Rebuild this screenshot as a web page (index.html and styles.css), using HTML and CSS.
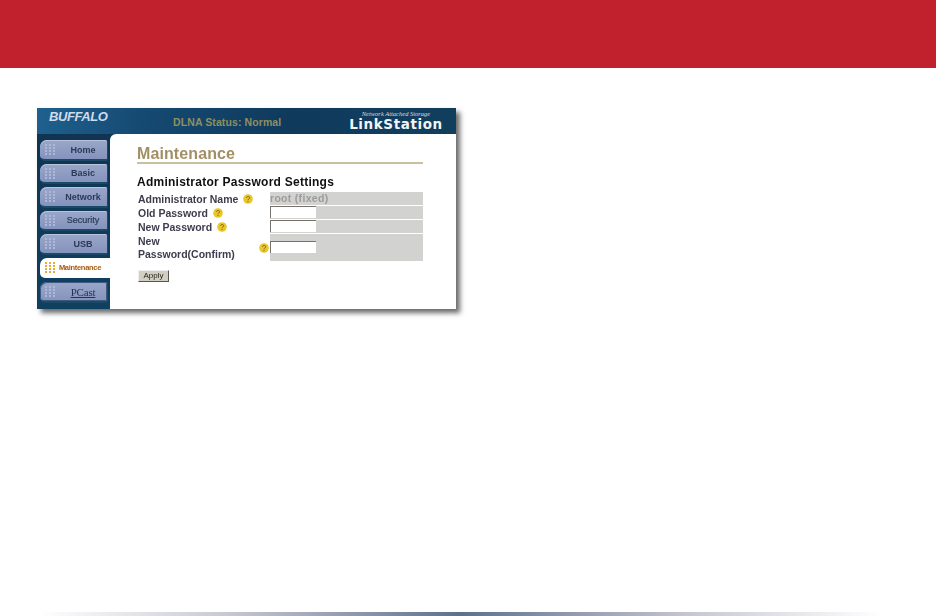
FILE: index.html
```html
<!DOCTYPE html>
<html lang="en">
<head>
<meta charset="utf-8">
<title>LinkStation Maintenance</title>
<link rel="stylesheet" href="styles.css">
</head>
<body>
<svg class="defs" width="0" height="0" aria-hidden="true">
  <symbol id="dots" viewBox="0 0 11 11">
    <g fill="currentColor">
      <rect x="0" y="0" width="2" height="2"/><rect x="4" y="0" width="2" height="2"/><rect x="8" y="0" width="2" height="2"/>
      <rect x="0" y="3" width="2" height="2"/><rect x="4" y="3" width="2" height="2"/><rect x="8" y="3" width="2" height="2"/>
      <rect x="0" y="6" width="2" height="2"/><rect x="4" y="6" width="2" height="2"/><rect x="8" y="6" width="2" height="2"/>
      <rect x="0" y="9" width="2" height="2"/><rect x="4" y="9" width="2" height="2"/><rect x="8" y="9" width="2" height="2"/>
    </g>
  </symbol>
  <symbol id="help" viewBox="0 0 10 10">
    <circle cx="5" cy="5" r="4.800" fill="#e9c62c"/>
    <path d="M3.500 4c0-2 3.200-2 3.200-.2C6.700 5 5 4.800 5 6.200" fill="none" stroke="#8a6a10" stroke-width="1"/>
    <circle cx="5" cy="7.600" r=".7" fill="#8a6a10"/>
  </symbol>
</svg>
<header class="banner"></header>
<main class="stage">
  <div class="window">
    <div class="topbar">
      <div class="brand">BUFFALO</div>
      <div class="status">DLNA Status: Normal</div>
      <div class="product">
        <span class="product-tag">Network Attached Storage</span>
        <span class="product-name">LinkStation</span>
      </div>
    </div>
    <div class="body">
      <nav class="side">
        <a class="tab"><svg class="dots"><use href="#dots"/></svg><span class="tab-label">Home</span></a>
        <a class="tab"><svg class="dots"><use href="#dots"/></svg><span class="tab-label">Basic</span></a>
        <a class="tab"><svg class="dots"><use href="#dots"/></svg><span class="tab-label">Network</span></a>
        <a class="tab"><svg class="dots"><use href="#dots"/></svg><span class="tab-label tab-thin">Security</span></a>
        <a class="tab"><svg class="dots"><use href="#dots"/></svg><span class="tab-label">USB</span></a>
        <a class="tab tab-active"><svg class="dots"><use href="#dots"/></svg><span class="tab-label">Maintenance</span></a>
        <a class="tab tab-pcast"><svg class="dots"><use href="#dots"/></svg><span class="tab-label pcast">PCast</span></a>
      </nav>
      <section class="panel">
        <h1 class="title">Maintenance</h1>
        <h2 class="subtitle">Administrator Password Settings</h2>
        <div class="form">
          <div class="lbl">Administrator Name <svg class="help"><use href="#help"/></svg></div>
          <div class="val val-text">root (fixed)</div>
          <div class="lbl">Old Password <svg class="help"><use href="#help"/></svg></div>
          <div class="val"><span class="field"></span></div>
          <div class="lbl">New Password <svg class="help"><use href="#help"/></svg></div>
          <div class="val"><span class="field"></span></div>
          <div class="lbl lbl-wrap"><span class="wrap-text">New Password(Confirm)</span><svg class="help"><use href="#help"/></svg></div>
          <div class="val val-tall"><span class="field"></span></div>
        </div>
        <button class="apply" type="button">Apply</button>
      </section>
    </div>
  </div>
</main>
<footer class="rule"></footer>
</body>
</html>
```
FILE: styles.css
```css
* { box-sizing: border-box; }
html, body { margin: 0; padding: 0; }
body {
  width: 936px;
  height: 616px;
  background: #fff;
  display: flex;
  flex-direction: column;
  font-family: "Liberation Sans", Arial, sans-serif;
  overflow: hidden;
}
.defs { position: absolute; }
.banner { height: 68px; background: #c1212d; flex: none; }
.stage { flex: 1; padding: 40px 0 0 37px; }
.window {
  width: 419px;
  height: 201px;
  display: flex;
  flex-direction: column;
  box-shadow: 4px 4px 5px #6a6a6a;
  background: linear-gradient(#10324f, #104060);
  filter: blur(.45px);
}
.topbar {
  height: 26px;
  flex: none;
  display: flex;
  align-items: flex-start;
  background: linear-gradient(100deg, #1f618f 0, #154a72 25%, #0f3a5c 60%, #123e5e 100%);
}
.brand {
  width: 136px;
  padding: 1px 0 0 12px;
  font: italic bold 13px/15px "Liberation Sans", sans-serif;
  letter-spacing: -.4px;
  color: #cfdcec;
}
.status {
  width: 171px;
  padding-top: 8px;
  font-size: 10.500px;
  line-height: 12px;
  font-weight: bold;
  letter-spacing: .1px;
  color: #8f8f62;
}
.product { display: flex; flex-direction: column; align-items: center; width: 96px; margin-left: 4px; padding-top: 2px; }
.product-tag { font: italic 6.500px/7px "Liberation Serif", serif; color: #d5dde5; white-space: nowrap; }
.product-name { font: bold 13.500px/14px "DejaVu Sans", sans-serif; color: #f2f4f6; white-space: nowrap; letter-spacing: .6px; }
.body { flex: 1; display: flex; min-height: 0; }
.side {
  width: 73px;
  flex: none;
  padding: 6px 0 0 3px;
  display: flex;
  flex-direction: column;
  gap: 3px;
}
.tab {
  height: 20.500px;
  width: 68px;
  display: flex;
  align-items: center;
  padding: 1px 0 0 5px;
  color: #aeb8d6;
  background: linear-gradient(#9aa7ca, #8493bd);
  border-radius: 7px 2px 2px 5px;
  border-bottom: 2px solid #1b4a66;
  border-right: 1px solid #1b4a66;
  box-shadow: inset 0 1px 0 #b9c3dc;
}
.dots { width: 11px; height: 11px; flex: none; }
.tab-label {
  flex: 1;
  text-align: center;
  font-size: 9px;
  font-weight: bold;
  color: #2a3a56;
  padding-left: 3px;
}
.tab-thin { font-weight: normal; -webkit-text-stroke: .2px #2a3a56; }
.tab-active {
  width: 70px;
  background: #fff;
  border: 0;
  box-shadow: none;
  color: #e4ad3a;
  border-radius: 7px 0 0 5px;
  padding-top: 0;
}
.tab-active .tab-label { color: #a8590f; font-size: 7.500px; letter-spacing: -.3px; padding: 0 6px 0 0; }
.tab-pcast { margin-top: 1px; box-shadow: inset 0 0 0 1px #3f5a80; }
.pcast { font: 11px/12px "Liberation Serif", serif; color: #2a3450; letter-spacing: -.2px; text-decoration: underline; text-decoration-thickness: .5px; }
.panel {
  flex: 1;
  background: #fff;
  border-radius: 6px 0 0 0;
  padding: 11px 33px 0 27px;
}
.title {
  margin: 0;
  height: 19px;
  font-size: 16px;
  line-height: 17px;
  font-weight: bold;
  letter-spacing: .1px;
  color: #a38f65;
  border-bottom: 2px solid #c9c19b;
}
.subtitle {
  margin: 12px 0 0;
  font-size: 12px;
  line-height: 13px;
  font-weight: bold;
  letter-spacing: .25px;
  color: #111;
}
.form {
  display: grid;
  grid-template-columns: 132px 153px;
  grid-auto-rows: 12.500px;
  row-gap: 1.500px;
  margin-top: -1px;
  padding: 4px 0 0 1px;
}
.lbl {
  font-size: 10.500px;
  line-height: 14px;
  font-weight: bold;
  color: #3d3d4e;
  white-space: nowrap;
  display: flex;
  align-items: flex-start;
  gap: 5px;
}
.lbl-wrap { grid-row: span 2; height: 26.500px; white-space: normal; gap: 0; justify-content: space-between; padding: .5px 1px 0 0; }
.wrap-text { width: 108px; line-height: 13px; }
.help { width: 10px; height: 10px; flex: none; margin-top: 2px; }
.lbl-wrap .help { align-self: center; margin-top: 0; }
.val { background: #d2d2d0; display: flex; align-items: flex-start; }
.val-text { font-size: 10.500px; line-height: 13px; font-weight: bold; color: #9c9c9c; letter-spacing: .3px; }
.val-tall { grid-row: span 2; height: 26.500px; }
.val-tall .field { margin-top: 7px; }
.field {
  width: 46px;
  height: 12px;
  background: #fff;
  border-top: 1px solid #77716e;
  border-left: 1px solid #77716e;
}
.apply {
  display: block;
  margin: 9px 0 0 1px;
  width: 31px;
  height: 12px;
  padding: 0;
  background: #d2cfc2;
  border: 0;
  border-right: 1px solid #555;
  border-bottom: 1px solid #555;
  border-top: 1px solid #eee;
  border-left: 1px solid #eee;
  font: 8px/9px "Liberation Sans", sans-serif;
  color: #222;
}
.rule {
  flex: none;
  height: 4px;
  margin: 0 54px 0 39px;
  background: linear-gradient(90deg, #fff 0, #c9c9d3 22%, #5d718c 50%, #c9c9d3 78%, #fff 100%);
}
```
